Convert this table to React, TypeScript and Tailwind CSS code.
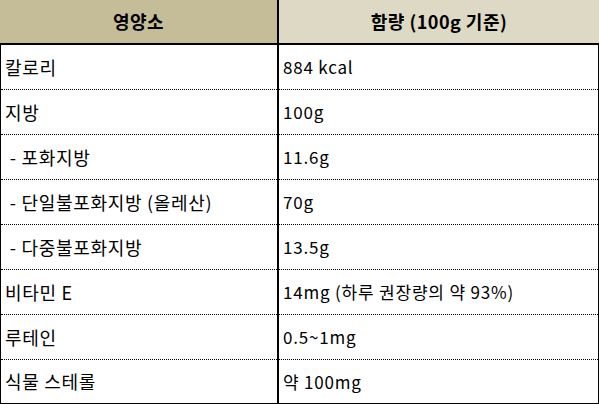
const rows: [string, string][] = [
  ["칼로리", "884 kcal"],
  ["지방", "100g"],
  ["\u00a0- 포화지방", "11.6g"],
  ["\u00a0- 단일불포화지방 (올레산)", "70g"],
  ["\u00a0- 다중불포화지방", "13.5g"],
  ["비타민 E", "14mg (하루 권장량의 약 93%)"],
  ["루테인", "0.5~1mg"],
  ["식물 스테롤", "약 100mg"],
];

export default function App() {
  return (
    <div
      className="w-[599px] h-[404px] bg-white text-black text-[17px]"
      style={{ fontFamily: '"Noto Sans CJK KR", "Noto Sans", sans-serif' }}
    >
      <div className="flex h-[43px] font-bold text-[18px] tracking-[0.5px]">
        <div className="w-[277px] bg-[#c4bd97] flex items-center justify-center">영양소</div>
        <div className="w-[2px] bg-black" />
        <div className="flex-1 bg-[#ddd9c4] flex items-center justify-center">함량 (100g 기준)</div>
      </div>
      <div className="h-[2px] bg-black" />
      <div className="border-l border-r border-b border-black">
        {rows.map(([name, amount], i) => {
          const last = i === rows.length - 1;
          const cell = last
            ? "h-[43px] flex items-center px-[4px] whitespace-pre"
            : "h-[45px] flex items-center px-[4px] whitespace-pre border-b border-dotted border-black";
          return (
            <div key={i} className="flex">
              <div className={`w-[276px] text-[18px] tracking-[0.7px] ${cell}`}>{name}</div>
              <div className="w-[2px] bg-black" />
              <div className={`flex-1 tracking-[0.8px] ${cell}`}>{amount}</div>
            </div>
          );
        })}
      </div>
    </div>
  );
}
